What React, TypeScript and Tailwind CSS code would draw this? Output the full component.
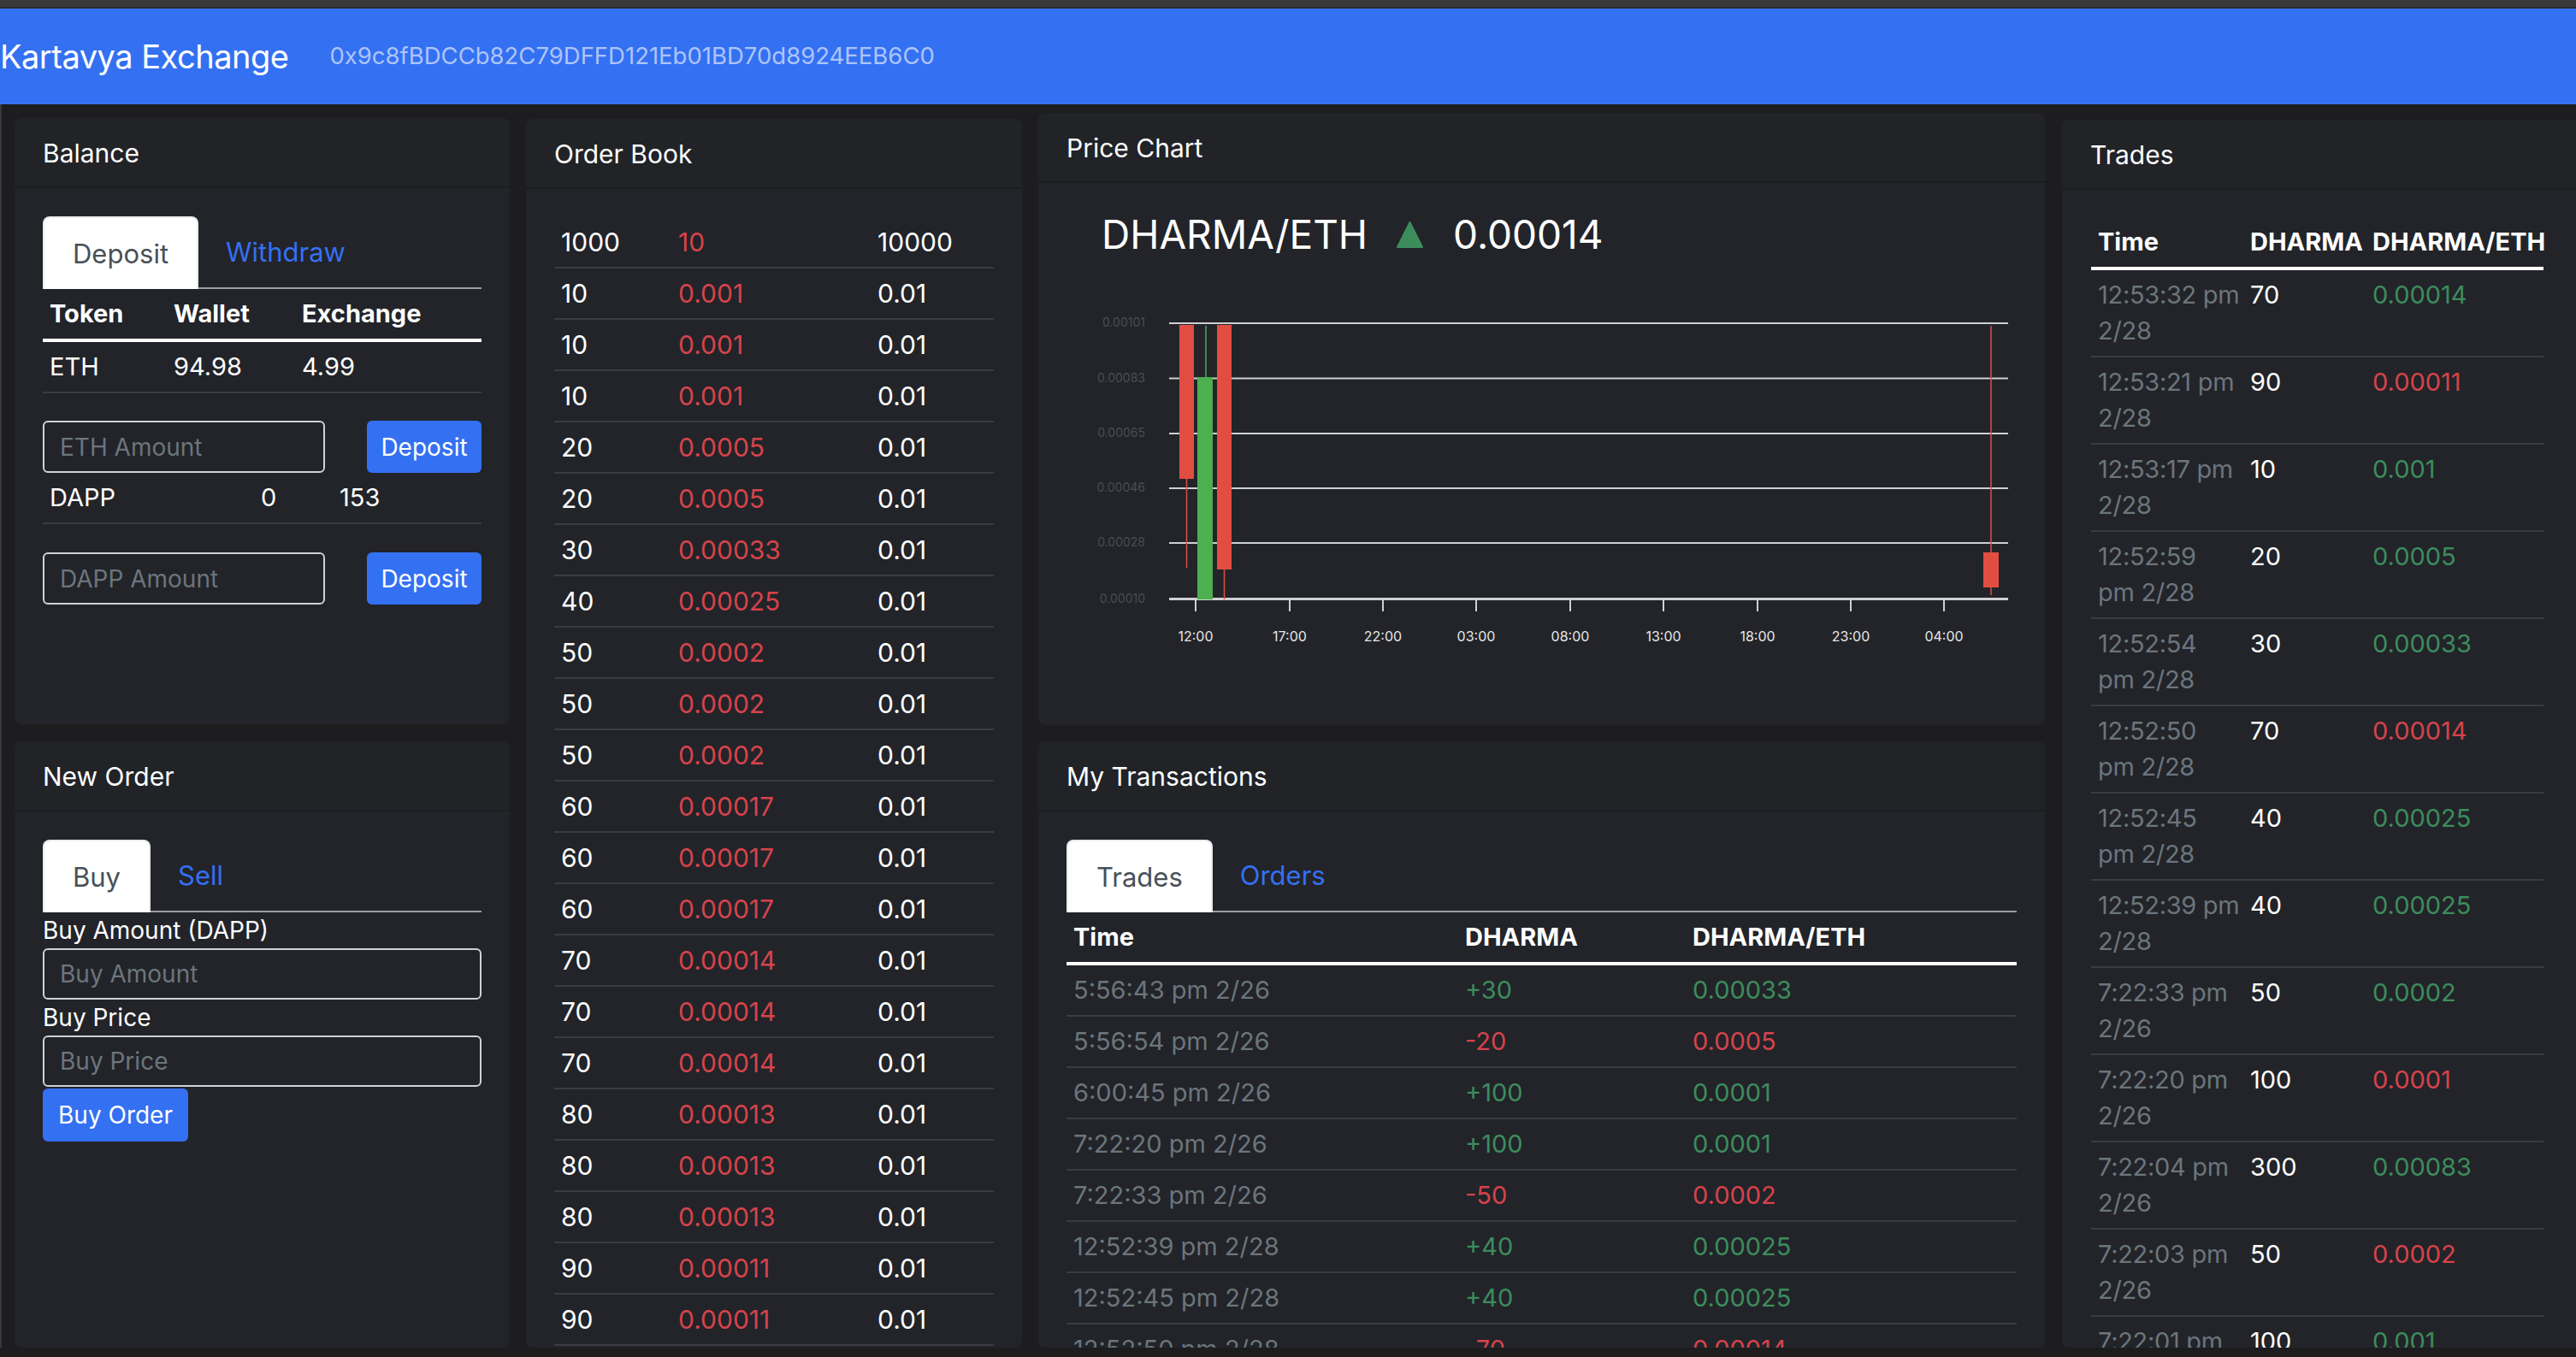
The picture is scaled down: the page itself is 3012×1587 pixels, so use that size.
import React from "react";

const RED = "text-[#d6434b]";
const GREEN = "text-[#3d8c5c]";

const orderBook: [string, string, string][] = [
  ["1000", "10", "10000"],
  ["10", "0.001", "0.01"],
  ["10", "0.001", "0.01"],
  ["10", "0.001", "0.01"],
  ["20", "0.0005", "0.01"],
  ["20", "0.0005", "0.01"],
  ["30", "0.00033", "0.01"],
  ["40", "0.00025", "0.01"],
  ["50", "0.0002", "0.01"],
  ["50", "0.0002", "0.01"],
  ["50", "0.0002", "0.01"],
  ["60", "0.00017", "0.01"],
  ["60", "0.00017", "0.01"],
  ["60", "0.00017", "0.01"],
  ["70", "0.00014", "0.01"],
  ["70", "0.00014", "0.01"],
  ["70", "0.00014", "0.01"],
  ["80", "0.00013", "0.01"],
  ["80", "0.00013", "0.01"],
  ["80", "0.00013", "0.01"],
  ["90", "0.00011", "0.01"],
  ["90", "0.00011", "0.01"],
];

// time line 1, time line 2, amount, price, up?
const trades: [string, string, string, string, boolean][] = [
  ["12:53:32 pm", "2/28", "70", "0.00014", true],
  ["12:53:21 pm", "2/28", "90", "0.00011", false],
  ["12:53:17 pm", "2/28", "10", "0.001", true],
  ["12:52:59", "pm 2/28", "20", "0.0005", true],
  ["12:52:54", "pm 2/28", "30", "0.00033", true],
  ["12:52:50", "pm 2/28", "70", "0.00014", false],
  ["12:52:45", "pm 2/28", "40", "0.00025", true],
  ["12:52:39 pm", "2/28", "40", "0.00025", true],
  ["7:22:33 pm", "2/26", "50", "0.0002", true],
  ["7:22:20 pm", "2/26", "100", "0.0001", false],
  ["7:22:04 pm", "2/26", "300", "0.00083", true],
  ["7:22:03 pm", "2/26", "50", "0.0002", false],
  ["7:22:01 pm", "2/26", "100", "0.001", true],
];

const myTrades: [string, string, string, boolean][] = [
  ["5:56:43 pm 2/26", "+30", "0.00033", true],
  ["5:56:54 pm 2/26", "-20", "0.0005", false],
  ["6:00:45 pm 2/26", "+100", "0.0001", true],
  ["7:22:20 pm 2/26", "+100", "0.0001", true],
  ["7:22:33 pm 2/26", "-50", "0.0002", false],
  ["12:52:39 pm 2/28", "+40", "0.00025", true],
  ["12:52:45 pm 2/28", "+40", "0.00025", true],
  ["12:52:50 pm 2/28", "-70", "0.00014", false],
];

function Card({
  title,
  className,
  bodyClass,
  children,
}: {
  title: string;
  className: string;
  bodyClass?: string;
  children: React.ReactNode;
}) {
  return (
    <div className={`flex flex-col overflow-hidden rounded-[8px] bg-[#222429] ${className}`}>
      <div className="flex h-[82px] shrink-0 items-center border-b-2 border-[#1c1d20] bg-[#212327] px-[33px] pt-[3px] text-[30px]">
        {title}
      </div>
      <div className={bodyClass ?? "flex-1 px-[33px] pt-[33px]"}>{children}</div>
    </div>
  );
}

function Tabs({ active, other }: { active: string; other: string }) {
  return (
    <div className="flex items-end border-b-2 border-[#9b9da0]">
      <div className="-mb-[2px] rounded-t-[8px] border-2 border-b-0 border-[#e9ecef] bg-white px-[33px] pt-[19px] pb-[18px] text-[31px] leading-[46px] text-[#495057]">
        {active}
      </div>
      <div className="px-[32px] pt-[19px] pb-[18px] text-[31px] leading-[46px] text-[#3470f2]">
        {other}
      </div>
    </div>
  );
}

function AmountForm({ placeholder }: { placeholder: string }) {
  return (
    <div className="flex items-center">
      <input
        placeholder={placeholder}
        className="h-[61px] w-[330px] rounded-[6px] border-2 border-[#cfd2d6] bg-transparent px-[18px] text-[28px] outline-none placeholder:text-[#6c757d]"
      />
      <button className="ml-auto h-[61px] w-[134px] rounded-[6px] bg-[#3470f2] text-[28px] text-white">
        Deposit
      </button>
    </div>
  );
}

function PriceChart() {
  const grid = [60, 124.5, 189, 253, 317];
  const labelY = [60, 124.5, 189, 253, 317, 382.5];
  const labels = ["0.00101", "0.00083", "0.00065", "0.00046", "0.00028", "0.00010"];
  const ticks = [184, 294, 403, 512, 622, 731, 841, 950, 1059];
  const times = ["12:00", "17:00", "22:00", "03:00", "08:00", "13:00", "18:00", "23:00", "04:00"];

  return (
    <svg width="1177" height="440" className="mt-[16px] block">
      {grid.map((y) => (
        <line key={y} x1="153" x2="1134" y1={y} y2={y} stroke="#cfd0d2" strokeWidth="2" />
      ))}
      <line x1="153" x2="1134" y1="382.5" y2="382.5" stroke="#cfd0d2" strokeWidth="3" />
      {labels.map((l, i) => (
        <text
          key={l}
          x="125"
          y={labelY[i] + 4}
          textAnchor="end"
          fontSize="14"
          fill="#4a4d52"
          fontFamily="Inter, sans-serif"
        >
          {l}
        </text>
      ))}
      {ticks.map((x, i) => (
        <g key={x}>
          <line x1={x} x2={x} y1="384" y2="397" stroke="#cfd0d2" strokeWidth="2" />
          <text
            x={x}
            y="432"
            textAnchor="middle"
            fontSize="16"
            fill="#e6e6e6"
            fontFamily="Inter, sans-serif"
          >
            {times[i]}
          </text>
        </g>
      ))}
      {/* candles */}
      <line x1="173.5" x2="173.5" y1="62" y2="346" stroke="#e24d42" strokeWidth="1.5" />
      <rect x="165" y="62" width="17" height="180" fill="#e24d42" />
      <line x1="196" x2="196" y1="63" y2="383" stroke="#4caf50" strokeWidth="1.5" />
      <rect x="186" y="123" width="18" height="260" fill="#4caf50" />
      <line x1="217.5" x2="217.5" y1="62" y2="383" stroke="#e24d42" strokeWidth="1.5" />
      <rect x="209" y="62" width="17" height="286" fill="#e24d42" />
      <line x1="1114" x2="1114" y1="63" y2="378" stroke="#e24d42" strokeWidth="1.5" />
      <rect x="1105" y="328" width="18" height="41" fill="#e24d42" />
    </svg>
  );
}

export default function App() {
  return (
    <div className="h-[1587px] w-[3012px] overflow-hidden bg-[#1d1d1f] font-[Inter,'Liberation_Sans',sans-serif] text-white">
      <div className="h-[8px] bg-[#39393c]" />
      <div className="h-[2px] bg-[#2a2b2e]" />

      {/* NAV */}
      <nav className="flex h-[112px] items-center bg-[#3470f2]">
        <span className="text-[38px] tracking-[-0.5px]">Kartavya Exchange</span>
        <span className="ml-[48px] text-[27.5px] text-white/60">
          0x9c8fBDCCb82C79DFFD121Eb01BD70d8924EEB6C0
        </span>
      </nav>

      <main className="flex border-l-2 border-[#38383b] pl-[15px]">
        {/* column 1 */}
        <div className="flex w-[579px] shrink-0 flex-col gap-[20px] pt-[16px]">
          <Card title="Balance" className="h-[709px]">
            <Tabs active="Deposit" other="Withdraw" />

            <div className="grid grid-cols-[145px_150px_1fr] border-b-4 border-white text-[29px] font-bold leading-[42px]">
              <div className="px-[8px] py-[8px]">Token</div>
              <div className="px-[8px] py-[8px]">Wallet</div>
              <div className="px-[8px] py-[8px]">Exchange</div>
            </div>
            <div className="grid grid-cols-[145px_150px_1fr] border-b-2 border-[#393c41] text-[29px] leading-[42px]">
              <div className="px-[8px] py-[8px]">ETH</div>
              <div className="px-[8px] py-[8px]">94.98</div>
              <div className="px-[8px] py-[8px]">4.99</div>
            </div>

            <div className="pt-[32px]">
              <AmountForm placeholder="ETH Amount" />
            </div>

            <div className="grid grid-cols-[247px_92px_1fr] border-b-2 border-[#393c41] text-[29px] leading-[42px]">
              <div className="px-[8px] py-[8px]">DAPP</div>
              <div className="px-[8px] py-[8px]">0</div>
              <div className="px-[8px] py-[8px]">153</div>
            </div>

            <div className="pt-[33px]">
              <AmountForm placeholder="DAPP Amount" />
            </div>
          </Card>

          <Card title="New Order" className="h-[709px]">
            <Tabs active="Buy" other="Sell" />
            <div className="text-[28px] leading-[42px]">Buy Amount (DAPP)</div>
            <input
              placeholder="Buy Amount"
              className="block h-[60px] w-full rounded-[6px] border-2 border-[#cfd2d6] bg-transparent px-[18px] text-[28px] outline-none placeholder:text-[#6c757d]"
            />
            <div className="text-[28px] leading-[42px]">Buy Price</div>
            <input
              placeholder="Buy Price"
              className="block h-[60px] w-full rounded-[6px] border-2 border-[#cfd2d6] bg-transparent px-[18px] text-[28px] outline-none placeholder:text-[#6c757d]"
            />
            <button className="mt-[2px] h-[62px] rounded-[6px] bg-[#3470f2] px-[18px] text-[28px] text-white">
              Buy Order
            </button>
          </Card>
        </div>

        {/* column 2 */}
        <div className="ml-[19px] w-[580px] shrink-0 pt-[17px]">
          <Card title="Order Book" className="h-[1437px]" bodyClass="flex-1 px-[33px] pt-[33px]">
            {orderBook.map(([amount, price, total], i) => (
              <div
                key={i}
                className="grid grid-cols-[137px_233px_1fr] border-b-2 border-[#393c41] text-[30px] leading-[42px]"
              >
                <div className="px-[8px] py-[8px]">{amount}</div>
                <div className={`px-[8px] py-[8px] ${RED}`}>{price}</div>
                <div className="px-[8px] py-[8px]">{total}</div>
              </div>
            ))}
          </Card>
        </div>

        {/* column 3 */}
        <div className="ml-[19px] flex w-[1177px] shrink-0 flex-col gap-[19px] pt-[10px]">
          <Card title="Price Chart" className="h-[716px]" bodyClass="flex-1">
            <div className="flex items-center pl-[74px] pt-[32px] text-[46px] leading-[56px]">
              <span>DHARMA/ETH</span>
              <svg width="31" height="31" viewBox="0 0 31 31" className="ml-[34px]">
                <path d="M15.5 1 L30 30 L1 30 Z" fill="#3d8c5c" strokeLinejoin="round" stroke="#3d8c5c" strokeWidth="2" />
              </svg>
              <span className="ml-[35px]">0.00014</span>
            </div>
            <PriceChart />
          </Card>

          <Card title="My Transactions" className="h-[709px]" bodyClass="flex-1 px-[33px] pt-[33px]">
            <Tabs active="Trades" other="Orders" />
            <div className="grid grid-cols-[458px_266px_1fr] border-b-4 border-white text-[29px] font-bold leading-[42px]">
              <div className="px-[8px] py-[8px]">Time</div>
              <div className="px-[8px] py-[8px]">DHARMA</div>
              <div className="px-[8px] py-[8px]">DHARMA/ETH</div>
            </div>
            {myTrades.map(([time, amount, price, up], i) => (
              <div
                key={i}
                className="grid grid-cols-[458px_266px_1fr] border-b-2 border-[#393c41] text-[29px] leading-[42px]"
              >
                <div className="px-[8px] py-[8px] text-[#6c757d]">{time}</div>
                <div className={`px-[8px] py-[8px] ${up ? GREEN : RED}`}>{amount}</div>
                <div className={`px-[8px] py-[8px] ${up ? GREEN : RED}`}>{price}</div>
              </div>
            ))}
          </Card>
        </div>

        {/* column 4 */}
        <div className="ml-[20px] w-[640px] shrink-0 pt-[18px]">
          <Card title="Trades" className="h-[1436px]" bodyClass="flex-1 pl-[34px] pt-[32px]">
            <div className="w-[529px]">
              <div className="grid grid-cols-[178px_143px_1fr] border-b-4 border-white text-[29px] font-bold leading-[42px]">
                <div className="px-[8px] py-[8px]">Time</div>
                <div className="px-[8px] py-[8px]">DHARMA</div>
                <div className="px-[8px] py-[8px]">DHARMA/ETH</div>
              </div>
              {trades.map(([t1, t2, amount, price, up], i) => (
                <div
                  key={i}
                  className="grid grid-cols-[178px_143px_1fr] border-b-2 border-[#393c41] text-[29px] leading-[42px]"
                >
                  <div className="whitespace-nowrap px-[8px] py-[8px] tracking-[-0.3px] text-[#6c757d]">
                    <div>{t1}</div>
                    <div>{t2}</div>
                  </div>
                  <div className="px-[8px] py-[8px]">{amount}</div>
                  <div className={`px-[8px] py-[8px] ${up ? GREEN : RED}`}>{price}</div>
                </div>
              ))}
            </div>
          </Card>
        </div>
      </main>
    </div>
  );
}
